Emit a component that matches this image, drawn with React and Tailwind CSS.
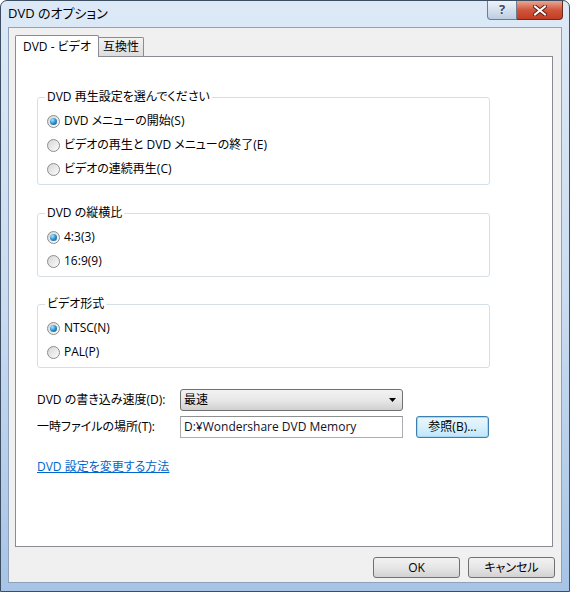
import { useState } from "react";

const FONT = "font-['Open_Sans','Noto_Sans_CJK_JP',sans-serif] [font-feature-settings:'palt']";

const Radio = ({ label, checked, onClick }) => (
  <div className="flex items-center h-[24px] gap-[4px] cursor-default" onClick={onClick}>
    <div className="w-[13px] h-[13px] rounded-full border border-[#8c8c8c] bg-gradient-to-br from-[#d6d6d6] to-[#fcfcfc] flex items-center justify-center">
      {checked && (
        <div className="w-[7px] h-[7px] rounded-full bg-radial-[at_35%_30%] from-[#a6e6fc] via-[#2c8fd0] to-[#0b4d80]" />
      )}
    </div>
    <span className="text-[12px] leading-[16px] text-black">{label}</span>
  </div>
);

const Group = ({ title, options, value, onChange, className }) => (
  <fieldset className={`w-[453px] border border-[#d5dfe5] rounded-[3px] ${className}`}>
    <legend className="ml-[7px] px-[2px] text-[12px] leading-[16px] text-black">{title}</legend>
    <div className="pl-[9px] pt-[4px] pb-[3px]">
      {options.map((o, i) => (
        <Radio key={o} label={o} checked={value === i} onClick={() => onChange(i)} />
      ))}
    </div>
  </fieldset>
);

const WinButton = ({ children, className = "" }) => (
  <button className={`h-[21px] rounded-[3px] border border-[#707070] bg-gradient-to-b from-[#f2f2f2] via-[#e6e6e6] to-[#d2d2d2] text-[12px] leading-[16px] text-black flex items-center justify-center ${className}`}>
    {children}
  </button>
);

export default function App() {
  const [play, setPlay] = useState(0);
  const [ratio, setRatio] = useState(0);
  const [format, setFormat] = useState(0);

  return (
    <div className={`w-[570px] h-[592px] flex flex-col rounded-t-[7px] border border-[#3d4d62] bg-gradient-to-b from-[#dde9f6] via-[#cadcf0] to-[#a7c4e6] ${FONT}`}>
      {/* title bar */}
      <div className="h-[26px] flex items-start justify-between pl-[7px] pr-[6px]">
        <div className="h-[26px] flex items-center text-[13px] text-black">DVD のオプション</div>
        <div className="flex">
          <div className="w-[30px] h-[19px] rounded-bl-[4px] border border-t-0 border-[#6d7d92] bg-gradient-to-b from-[#eef3f9] via-[#d5e0ee] to-[#bccde2] flex items-center justify-center text-[13px] font-bold text-[#3c4a5e] [text-shadow:0_0_2px_#fff]">
            ?
          </div>
          <div className="w-[46px] h-[19px] rounded-br-[4px] border border-l-0 border-t-0 border-[#6b2c20] bg-gradient-to-b from-[#e8a693] via-[#d0553c] to-[#c23c22] flex items-center justify-center">
            <svg width="14" height="11" viewBox="0 0 14 11">
              <path d="M2 1.5 L12 9.5 M12 1.5 L2 9.5" stroke="#5a1e12" strokeWidth="4" strokeLinecap="square" />
              <path d="M2 1.5 L12 9.5 M12 1.5 L2 9.5" stroke="#ffffff" strokeWidth="2" strokeLinecap="square" />
            </svg>
          </div>
        </div>
      </div>

      {/* client area */}
      <div className="flex-1 mx-[7px] mb-[8px] border border-[#8fa2b9] bg-[#f0f0f0] flex flex-col pl-[6px] pr-[6px] pt-[7px]">
        {/* tabs */}
        <div className="h-[21px] flex items-end relative z-10">
          <div className="h-[22px] -mb-px px-[7px] bg-white border border-b-0 border-[#898c95] rounded-t-[2px] flex items-center text-[12px] text-black">
            DVD - ビデオ
          </div>
          <div className="h-[19px] px-[4px] border border-l-0 border-b-0 border-[#898c95] rounded-tr-[2px] bg-gradient-to-b from-[#f3f3f3] to-[#dcdcdc] flex items-center text-[12px] text-black">
            互換性
          </div>
        </div>

        {/* panel */}
        <div className="flex-1 mr-[2px] bg-white border border-[#898c95] pl-[21px] pt-[32px] flex flex-col">
          <Group
            title="DVD 再生設定を選んでください"
            options={["DVD メニューの開始(S)", "ビデオの再生と DVD メニューの終了(E)", "ビデオの連続再生(C)"]}
            value={play}
            onChange={setPlay}
          />
          <Group
            title="DVD の縦横比"
            options={["4:3(3)", "16:9(9)"]}
            value={ratio}
            onChange={setRatio}
            className="mt-[20px]"
          />
          <Group
            title="ビデオ形式"
            options={["NTSC(N)", "PAL(P)"]}
            value={format}
            onChange={setFormat}
            className="mt-[19px]"
          />

          <div className="mt-[21px] flex items-center h-[22px]">
            <span className="w-[143px] text-[12px] text-black">DVD の書き込み速度(D):</span>
            <div className="w-[223px] h-[22px] rounded-[3px] border border-[#707070] bg-gradient-to-b from-[#f2f2f2] via-[#e8e8e8] to-[#d0d0d0] flex items-center justify-between pl-[3px] pr-[6px]">
              <span className="text-[12px] text-black">最速</span>
              <svg width="7" height="4" viewBox="0 0 7 4">
                <path d="M0 0 H7 L3.5 4 Z" fill="#000" />
              </svg>
            </div>
          </div>

          <div className="mt-[5px] flex items-center h-[22px]">
            <span className="w-[143px] text-[12px] text-black">一時ファイルの場所(T):</span>
            <div className="w-[223px] h-[22px] border border-[#abadb3] border-t-[#8e8f8f] bg-white flex items-center pl-[3px] text-[12px] text-[#101028]">
              D:¥Wondershare DVD Memory
            </div>
            <button className="ml-[13px] w-[73px] h-[22px] rounded-[3px] border border-[#3c7fb1] bg-gradient-to-b from-[#eaf6fd] via-[#d9f0fc] to-[#bee6fd] shadow-[inset_0_0_0_1px_#a7d9f5] text-[12px] text-black flex items-center justify-center">
              参照(B)...
            </button>
          </div>

          <a href="#" className="mt-[21px] w-fit text-[12px] leading-[16px] text-[#0066cc] underline">
            DVD 設定を変更する方法
          </a>
        </div>

        {/* buttons */}
        <div className="flex justify-end gap-[8px] pt-[10px] pb-[4px]">
          <WinButton className="w-[87px]">OK</WinButton>
          <WinButton className="w-[87px]">キャンセル</WinButton>
        </div>
      </div>
    </div>
  );
}
